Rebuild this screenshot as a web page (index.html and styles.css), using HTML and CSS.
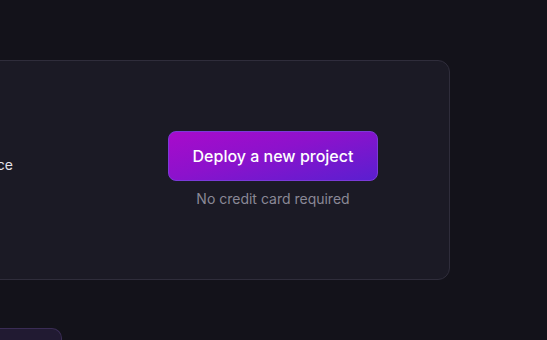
FILE: index.html
```html
<!DOCTYPE html>
<html lang="en">
<head>
<meta charset="utf-8">
<title>Deploy</title>
<link rel="stylesheet" href="styles.css">
</head>
<body>
<main class="page">
  <section class="card">
    <div class="card-info">
      <p class="card-text">Spin up a secure, fully managed workspace</p>
    </div>
    <div class="card-cta">
      <button class="deploy-btn" type="button">Deploy a new project</button>
      <span class="cta-note">No credit card required</span>
    </div>
  </section>
  <div class="below">
    <div class="chip"></div>
  </div>
</main>
</body>
</html>
```

FILE: styles.css
```css
* { box-sizing: border-box; }
html, body { margin: 0; padding: 0; }
body {
  background: #13121a;
  font-family: Inter, "Noto Sans", sans-serif;
  color: #e6e4ee;
  width: 547px;
  height: 340px;
  overflow: hidden;
}
.page {
  padding-top: 60px;
  display: flex;
  flex-direction: column;
}
.card {
  display: flex;
  align-items: center;
  margin-left: -500px;
  width: 950px;
  height: 220px;
  background: #1b1a25;
  border: 1px solid #2f2d3b;
  border-radius: 12px;
  padding: 0 48px 0 0;
  gap: 132px;
}
.card-info {
  flex: 1;
  display: flex;
  flex-direction: column;
  align-items: flex-end;
  padding-bottom: 11px;
  min-width: 0;
}
.card-text {
  margin: 0;
  font-size: 14px;
  line-height: 20px;
  color: #e4e2ea;
  white-space: nowrap;
}
.card-cta {
  width: 256px;
  flex: none;
  display: flex;
  flex-direction: column;
  align-items: center;
  gap: 8px;
}
.deploy-btn {
  width: 210px;
  height: 50px;
  border-radius: 8px;
  border: 1px solid #7b3ad8;
  background: linear-gradient(165deg, #a80bcb 0%, #8c12cc 45%, #5a1fd0 100%);
  color: #ffffff;
  font-family: Inter, "Noto Sans", sans-serif;
  font-size: 16px;
  font-weight: 500;
  cursor: pointer;
}
.cta-note {
  font-size: 14px;
  line-height: 20px;
  color: #8a8896;
}
.below {
  margin-top: 48px;
  display: flex;
}
.chip {
  margin-left: -40px;
  width: 102px;
  height: 12px;
  border-radius: 10px 10px 0 0;
  background: #211a32;
  border: 1px solid #3a2c55;
  border-bottom: none;
}
```
